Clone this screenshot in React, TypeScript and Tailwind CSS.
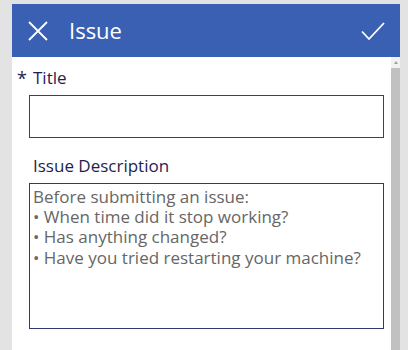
import React from 'react';

const font = { fontFamily: '"Open Sans", "Noto Sans", sans-serif' };

const App: React.FC = () => {
  return (
    <div className="w-[408px] h-[350px] bg-[#e3e3e3] overflow-hidden pt-1 pl-3 pr-2" style={font}>
      <div className="flex flex-col h-full bg-white">
        {/* Header */}
        <div className="h-[53px] bg-[#3a60b4] flex items-center pl-4 pr-[15px] shrink-0">
          <svg width="20" height="20" viewBox="0 0 20 20">
            <path d="M1 1 L19 19 M19 1 L1 19" stroke="white" strokeWidth="1.8" fill="none" />
          </svg>
          <h1 className="ml-[21px] text-[22px] text-white leading-none flex-1 -mt-[1px]">Issue</h1>
          <svg width="24" height="20" viewBox="0 0 24 20">
            <path d="M1 10.5 L8 18 L23 2" stroke="white" strokeWidth="1.8" fill="none" />
          </svg>
        </div>

        <div className="flex flex-1 min-h-0">
          {/* Form */}
          <div className="flex-1 pl-[17px] pr-[7px] pt-[11px]">
            <div className="flex items-center text-[17px] text-[#1e1e50] leading-5 -ml-3">
              <span className="w-4 text-[18px] leading-none">*</span>
              <span>Title</span>
            </div>
            <div className="mt-[7px] h-[43px] border border-[#3a3d6e]" />
            <div className="mt-[18px] pl-1 text-[17px] text-[#1e1e50] leading-5">Issue Description</div>
            <div className="mt-[7px] h-[146px] border border-[#343770] px-[3px] pt-[3px] text-[17px] text-[#666] leading-[20.2px]">
              <div>Before submitting an issue:</div>
              <div>• When time did it stop working?</div>
              <div>• Has anything changed?</div>
              <div>• Have you tried restarting your machine?</div>
            </div>
          </div>

          {/* Scrollbar */}
          <div className="w-[9px] flex flex-col bg-[#f2f2f2]">
            <div className="h-[11px] flex items-center justify-center">
              <div className="w-0 h-0 border-l-[2px] border-r-[2px] border-b-[3px] border-l-transparent border-r-transparent border-b-[#a0a0a0]" />
            </div>
            <div className="flex-1 bg-[#c1c1c1]" />
          </div>
        </div>
      </div>
    </div>
  );
};

export default App;
